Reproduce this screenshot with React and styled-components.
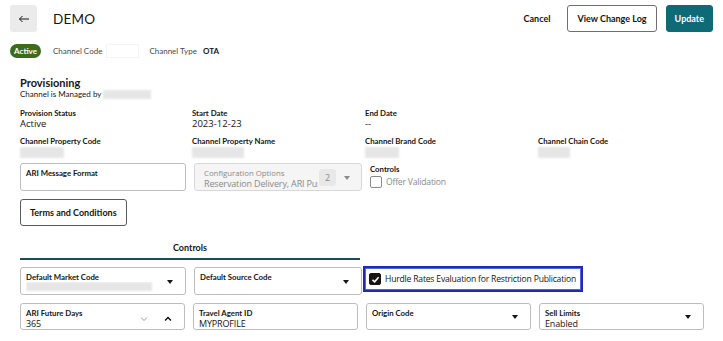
import React from "react";
import styled, { createGlobalStyle } from "styled-components";

const Global = createGlobalStyle`
  html, body { margin: 0; background: #fff; }
  body { font-family: Lato, "Open Sans", sans-serif; color: #161513; }
  * { box-sizing: border-box; }
`;

const Page = styled.div`
  width: 723px;
  height: 341px;
  overflow: hidden;
  padding: 5px 10px 0 10px;
`;

const Header = styled.div`
  display: flex;
  align-items: center;
  height: 27px;
`;

const BackBtn = styled.button`
  width: 27px;
  height: 27px;
  border: 0;
  border-radius: 3px;
  background: #ebebeb;
  display: flex;
  align-items: center;
  justify-content: center;
  padding: 0;
`;

const Title = styled.div`
  margin-left: 16px;
  font-size: 13.5px;
  letter-spacing: 0.2px;
  color: #161513;
`;

const Spacer = styled.div` flex: 1; `;

const TextBtn = styled.button`
  border: 0;
  background: transparent;
  font-family: Lato, sans-serif;
  font-weight: 700;
  font-size: 9px;
  color: #161513;
  margin-right: 17px;
  padding: 0;
`;

const Btn = styled.button`
  height: 27px;
  border-radius: 3px;
  font-family: Lato, sans-serif;
  font-weight: 700;
  font-size: 9px;
  padding: 0 ${p => p.$px || 9}px;
  border: 1px solid ${p => (p.$primary ? "#0e6a74" : "#6f6f6f")};
  background: ${p => (p.$primary ? "#0e6a74" : "#fff")};
  color: ${p => (p.$primary ? "#fff" : "#161513")};
  margin-left: ${p => p.$ml || 0}px;
`;

const MetaRow = styled.div`
  display: flex;
  align-items: center;
  margin-top: 12px;
  height: 14px;
  font-size: 8px;
  color: #4a4a4a;
`;

const Badge = styled.span`
  background: #3d6a1c;
  color: #fff;
  font-weight: 700;
  font-size: 8px;
  height: 14px;
  width: 31px;
  justify-content: center;
  border-radius: 7px;
  display: inline-flex;
  align-items: center;
  margin-right: 12px;
`;

const MetaLabel = styled.span`
  margin-right: ${p => p.$mr || 6}px;
`;

const MetaValue = styled.span`
  font-weight: 700;
  color: #161513;
`;

const WhiteBox = styled.span`
  display: inline-block;
  width: 33px;
  height: 14px;
  border: 1px solid #f4f4f4;
  margin-right: 10px;
`;

const Section = styled.div`
  padding: 0 0 0 10px;
`;

const SectionTitle = styled.div`
  margin-top: 18px;
  font-size: 11px;
  font-weight: 700;
  line-height: 13px;
`;

const SubTitle = styled.div`
  display: flex;
  align-items: center;
  font-size: 8px;
  line-height: 9px;
  margin-top: 1px;
  color: #161513;
`;

const Redacted = styled.span`
  display: inline-block;
  width: ${p => p.$w}px;
  height: ${p => p.$h || 9}px;
  background: #e6e6e6;
  filter: blur(1.2px);
  margin-left: ${p => p.$ml || 0}px;
`;

const InfoGrid = styled.div`
  display: grid;
  grid-template-columns: 172px 173px 173px 166px;
  row-gap: 6px;
  margin-top: 9px;
`;

const Info = styled.div`
  display: flex;
  flex-direction: column;
`;

const InfoLabel = styled.div`
  font-size: 7.8px;
  font-weight: 700;
  line-height: 10px;
`;

const InfoValue = styled.div`
  font-family: "Open Sans", sans-serif;
  font-size: 9.5px;
  line-height: 12px;
  height: 12px;
  display: flex;
  align-items: center;
`;

const FieldGrid = styled.div`
  display: grid;
  grid-template-columns: ${p => p.$cols || "166px 168px 170px 166px"};
  column-gap: 8px;
  margin-top: ${p => p.$mt || 0}px;
`;

const Field = styled.div`
  height: ${p => p.$h || 28}px;
  border: 1px solid ${p => (p.$disabled ? "#d8d8d8" : "#bdbdbd")};
  background: ${p => (p.$disabled ? "#f5f5f5" : "#fff")};
  border-radius: 3px;
  padding: 4px 6px 0 ${p => (p.$disabled ? 9 : 5)}px;
  display: flex;
  align-items: center;
`;

const FieldText = styled.div`
  flex: 1;
  min-width: 0;
  align-self: stretch;
  display: flex;
  flex-direction: column;
`;

const FieldLabel = styled.div`
  font-size: 7.8px;
  line-height: 10px;
  color: ${p => (p.$disabled ? "#8a8a8a" : "#161513")};
  font-family: ${p => (p.$disabled ? '"Open Sans", sans-serif' : "Lato, sans-serif")};
  font-weight: ${p => (p.$disabled ? 400 : 700)};
`;

const FieldValue = styled.div`
  font-family: "Open Sans", sans-serif;
  font-size: 9px;
  letter-spacing: -0.15px;
  line-height: 11px;
  white-space: nowrap;
  overflow: hidden;
  color: ${p => (p.$disabled ? "#8a8a8a" : "#161513")};
`;

const Count = styled.span`
  flex: none;
  width: 17px;
  height: 17px;
  background: #e8e8e8;
  border-radius: 3px;
  font-family: "Open Sans", sans-serif;
  font-size: 9px;
  color: #8a8a8a;
  display: flex;
  align-items: center;
  justify-content: center;
  margin: 0 0 3px 1px;
`;

const Caret = styled.span`
  flex: none;
  width: 0;
  height: 0;
  border-left: 3.5px solid transparent;
  border-right: 3.5px solid transparent;
  border-top: 4px solid ${p => p.$color || "#161513"};
  margin: 0 ${p => p.$mr || 7}px 3px ${p => p.$ml || 8}px;
`;

const CheckGroup = styled.div`
  padding-top: 1px;
`;

const CheckRow = styled.label`
  display: flex;
  align-items: center;
  gap: 4px;
  margin-top: ${p => p.$mt || 0}px;
  white-space: nowrap;
  font-family: "Open Sans", sans-serif;
  font-size: 8.6px;
  letter-spacing: -0.2px;
  color: ${p => (p.$muted ? "#8a8a8a" : "#161513")};
`;

const Box = styled.span`
  flex: none;
  width: 12px;
  height: 12px;
  border-radius: 2px;
  border: 1px solid ${p => (p.$checked ? "#161513" : "#8a8a8a")};
  background: ${p => (p.$checked ? "#161513" : "#fff")};
  display: inline-flex;
  align-items: center;
  justify-content: center;
`;

const TermsBtn = styled.button`
  margin-top: 8px;
  height: 27px;
  padding: 0 9px;
  border: 1px solid #5a5a5a;
  border-radius: 3px;
  background: #fff;
  font-family: Lato, sans-serif;
  font-weight: 700;
  font-size: 9px;
  color: #161513;
`;

const Tabs = styled.div`
  margin-top: 16px;
  width: 340px;
  border-bottom: 2px solid #1f4a57;
  display: flex;
  justify-content: center;
  padding-bottom: 5px;
  font-size: 9px;
  font-weight: 700;
`;

const Focus = styled.div`
  justify-self: start;
  margin-left: -7px;
  margin-top: -1px;
  height: 26px;
  border: 2px solid #1d2bb3;
  box-shadow: inset 0 0 0 1px #5665de;
  display: flex;
  align-items: center;
  padding: 0 5px 0 4px;
`;

const Chev = ({ up, color }) => (
  <svg width="8" height="6" viewBox="0 0 8 6" style={{ flex: "none", marginRight: up ? 6 : 16 }}>
    <path d={up ? "M1 4.5 L4 1.5 L7 4.5" : "M1 1.5 L4 4.5 L7 1.5"} fill="none" stroke={color} strokeWidth={up ? 1.5 : 1} />
  </svg>
);

const Check = () => (
  <svg width="9" height="9" viewBox="0 0 9 9">
    <path d="M1.5 4.8 L3.6 6.8 L7.6 2.2" fill="none" stroke="#fff" strokeWidth="1.6" />
  </svg>
);

export default function App() {
  return (
    <Page>
      <Global />
      <Header>
        <BackBtn aria-label="Back">
          <svg width="12" height="8" viewBox="0 0 12 8">
            <path d="M11 4 H1.5 M4.5 1 L1.5 4 L4.5 7" fill="none" stroke="#161513" strokeWidth="1" />
          </svg>
        </BackBtn>
        <Title>DEMO</Title>
        <Spacer />
        <TextBtn>Cancel</TextBtn>
        <Btn $px={9}>View Change Log</Btn>
        <Btn $primary $ml={9} $px={8}>Update</Btn>
      </Header>

      <MetaRow>
        <Badge>Active</Badge>
        <MetaLabel $mr={4}>Channel Code</MetaLabel>
        <WhiteBox />
        <MetaLabel $mr={6}>Channel Type</MetaLabel>
        <MetaValue>OTA</MetaValue>
      </MetaRow>

      <Section>
        <SectionTitle>Provisioning</SectionTitle>
        <SubTitle>
          Channel is Managed by <Redacted $w={48} $h={9} $ml={2} />
        </SubTitle>

        <InfoGrid>
          <Info>
            <InfoLabel>Provision Status</InfoLabel>
            <InfoValue>Active</InfoValue>
          </Info>
          <Info>
            <InfoLabel>Start Date</InfoLabel>
            <InfoValue>2023-12-23</InfoValue>
          </Info>
          <Info>
            <InfoLabel>End Date</InfoLabel>
            <InfoValue>--</InfoValue>
          </Info>
          <div />
          <Info>
            <InfoLabel>Channel Property Code</InfoLabel>
            <InfoValue><Redacted $w={44} $h={11} /></InfoValue>
          </Info>
          <Info>
            <InfoLabel>Channel Property Name</InfoLabel>
            <InfoValue><Redacted $w={52} $h={11} /></InfoValue>
          </Info>
          <Info>
            <InfoLabel>Channel Brand Code</InfoLabel>
            <InfoValue><Redacted $w={34} $h={11} /></InfoValue>
          </Info>
          <Info>
            <InfoLabel>Channel Chain Code</InfoLabel>
            <InfoValue><Redacted $w={32} $h={11} /></InfoValue>
          </Info>
        </InfoGrid>

        <FieldGrid $mt={5}>
          <Field>
            <FieldText><FieldLabel>ARI Message Format</FieldLabel></FieldText>
          </Field>
          <Field $disabled>
            <FieldText>
              <FieldLabel $disabled>Configuration Options</FieldLabel>
              <FieldValue $disabled>Reservation Delivery, ARI Push</FieldValue>
            </FieldText>
            <Count>2</Count>
            <Caret $color="#8a8a8a" $ml={8} $mr={5} />
          </Field>
          <CheckGroup>
            <FieldLabel>Controls</FieldLabel>
            <CheckRow $muted $mt={2}>
              <Box />
              Offer Validation
            </CheckRow>
          </CheckGroup>
        </FieldGrid>

        <TermsBtn>Terms and Conditions</TermsBtn>

        <Tabs>Controls</Tabs>

        <FieldGrid $mt={7}>
          <Field>
            <FieldText>
              <FieldLabel>Default Market Code</FieldLabel>
              <FieldValue><Redacted $w={126} $h={9} /></FieldValue>
            </FieldText>
            <Caret $mr={6} />
          </Field>
          <Field>
            <FieldText>
              <FieldLabel>Default Source Code</FieldLabel>
            </FieldText>
            <Caret $mr={6} />
          </Field>
          <Focus>
            <CheckRow>
              <Box $checked><Check /></Box>
              Hurdle Rates Evaluation for Restriction Publication
            </CheckRow>
          </Focus>
        </FieldGrid>

        <FieldGrid $mt={8} $cols="165px 165px 165px 165px">
          <Field $h={27}>
            <FieldText>
              <FieldLabel>ARI Future Days</FieldLabel>
              <FieldValue>365</FieldValue>
            </FieldText>
            <Chev color="#9a9a9a" />
            <Chev up color="#161513" />
          </Field>
          <Field $h={27}>
            <FieldText>
              <FieldLabel>Travel Agent ID</FieldLabel>
              <FieldValue>MYPROFILE</FieldValue>
            </FieldText>
          </Field>
          <Field $h={27}>
            <FieldText><FieldLabel>Origin Code</FieldLabel></FieldText>
            <Caret $mr={6} />
          </Field>
          <Field $h={27}>
            <FieldText>
              <FieldLabel>Sell Limits</FieldLabel>
              <FieldValue>Enabled</FieldValue>
            </FieldText>
            <Caret $mr={6} />
          </Field>
        </FieldGrid>
      </Section>
    </Page>
  );
}
